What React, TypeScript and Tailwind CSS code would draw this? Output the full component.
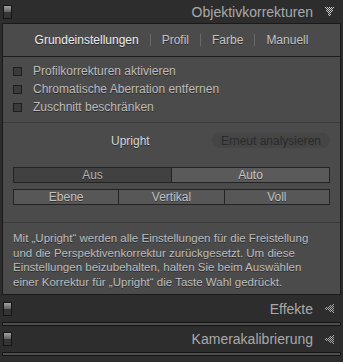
import React from 'react';

function DotTriangle({ dir }: { dir: 'down' | 'left' }) {
  const dots: { x: number; y: number }[] = [];
  for (let y = 0; y < 9; y++) {
    for (let x = 0; x < 9; x++) {
      if ((x + y) % 2 !== 0) continue;
      if (dir === 'down') {
        const inset = Math.floor(y / 2);
        if (x >= inset && x <= 8 - inset) dots.push({ x, y });
      } else {
        const inset = Math.floor((8 - x) / 2);
        if (y >= inset && y <= 8 - inset) dots.push({ x, y });
      }
    }
  }
  return (
    <svg width="9" height="9" viewBox="0 0 9 9" className="shrink-0">
      {dots.map((d, i) => (
        <rect key={i} x={d.x} y={d.y} width="1" height="1" fill={dir === 'down' ? '#cfcfcf' : '#a8a8a8'} />
      ))}
    </svg>
  );
}

function Toggle({ className = '' }: { className?: string }) {
  return (
    <div className={`flex h-[14px] w-[9px] shrink-0 flex-col border border-[#151515] ${className}`}>
      <div className="h-1/2 bg-gradient-to-b from-[#a4a4a4] to-[#5e5e5e]" />
      <div className="h-1/2 bg-[#343434]" />
    </div>
  );
}

function PanelHeader({ title, open, h }: { title: string; open?: boolean; h: string }) {
  return (
    <div className={`flex items-center pl-[3px] pr-[9px] ${h}`}>
      <Toggle />
      <div className="flex-1" />
      <span className="text-[14px] leading-none text-[#a9a9a9]">{title}</span>
      <div className="ml-[12px]">
        <DotTriangle dir={open ? 'down' : 'left'} />
      </div>
    </div>
  );
}

function Bar() {
  return <div className="mx-[2px] h-[4px] rounded-[1px] border border-[#141414] bg-[#4e4e4e]" />;
}

const checks = ['Profilkorrekturen aktivieren', 'Chromatische Aberration entfernen', 'Zuschnitt beschränken'];
const tabs = ['Grundeinstellungen', 'Profil', 'Farbe', 'Manuell'];

export default function App() {
  const shadow = '[text-shadow:0_1px_0_rgba(0,0,0,0.45)]';
  return (
    <div className="h-[362px] w-[343px] overflow-hidden bg-[#2d2d2d] font-['Liberation_Sans',sans-serif]">
      <PanelHeader title="Objektivkorrekturen" open h="h-[23px]" />

      <div className="mx-[2px] flex h-[272px] flex-col border border-[#1a1a1a] bg-[#4b4b4b]">
        {/* tabs */}
        <div className="flex h-[33px] shrink-0 items-center justify-center gap-[11px] border-b border-[#1e1e1e] text-[12px]">
          {tabs.map((t, i) => (
            <React.Fragment key={t}>
              {i > 0 && <span className="h-[12px] w-px bg-[#6a6a6a]" />}
              <span className={`${shadow} ${i === 0 ? 'text-[#ececec]' : 'text-[#c4c4c4]'}`}>{t}</span>
            </React.Fragment>
          ))}
        </div>

        <div className="flex flex-col pt-[5px]">
          {checks.map((c) => (
            <div key={c} className="flex h-[18px] items-center pl-[10px]">
              <span className="h-[9px] w-[9px] border border-[#1e1e1e] bg-[#3b3b3b]" />
              <span className={`ml-[11px] text-[12px] text-[#bcbcbc] ${shadow}`}>{c}</span>
            </div>
          ))}
        </div>

        <div className="mt-[6px] h-px bg-[#3a3a3a]" />

        <div className="mt-[10px] flex h-[15px] items-center pl-[108px] pr-[10px] text-[12px]">
          <span className={`text-[#d6d6d6] ${shadow}`}>Upright</span>
          <div className="flex-1" />
          <span className="flex h-[15px] w-[118px] items-center justify-center rounded-full bg-[#454545] text-[#2a2a2a]">
            Erneut analysieren
          </span>
        </div>

        <div className="mx-[10px] mt-[19px] flex h-[16px] border border-[#232323] text-[12px] leading-none">
          <div className={`flex flex-1 items-center justify-center border-r border-[#232323] bg-[#414141] text-[#b4b4b4] ${shadow}`}>
            Aus
          </div>
          <div className={`flex flex-1 items-center justify-center bg-[#5a5a5a] text-[#c8c8c8] ${shadow}`}>Auto</div>
        </div>

        <div className="mx-[10px] mt-[6px] flex h-[16px] border border-[#232323] text-[12px] leading-none">
          {['Ebene', 'Vertikal', 'Voll'].map((b, i) => (
            <div
              key={b}
              className={`flex flex-1 items-center justify-center bg-[#575757] text-[#c2c2c2] ${shadow} ${i < 2 ? 'border-r border-[#232323]' : ''}`}
            >
              {b}
            </div>
          ))}
        </div>

        <div className="mt-[17px] h-px bg-[#3a3a3a]" />

        <p className={`mt-[8px] px-[10px] text-[11.5px] leading-[14.5px] text-[#bdbdbd] ${shadow}`}>
          Mit „Upright“ werden alle Einstellungen für die Freistellung und die Perspektivenkorrektur zurückgesetzt. Um diese
          Einstellungen beizubehalten, halten Sie beim Auswählen einer Korrektur für „Upright“ die Taste Wahl gedrückt.
        </p>
      </div>

      <PanelHeader title="Effekte" h="h-[27px]" />
      <Bar />
      <PanelHeader title="Kamerakalibrierung" h="h-[26px]" />
      <Bar />
    </div>
  );
}
